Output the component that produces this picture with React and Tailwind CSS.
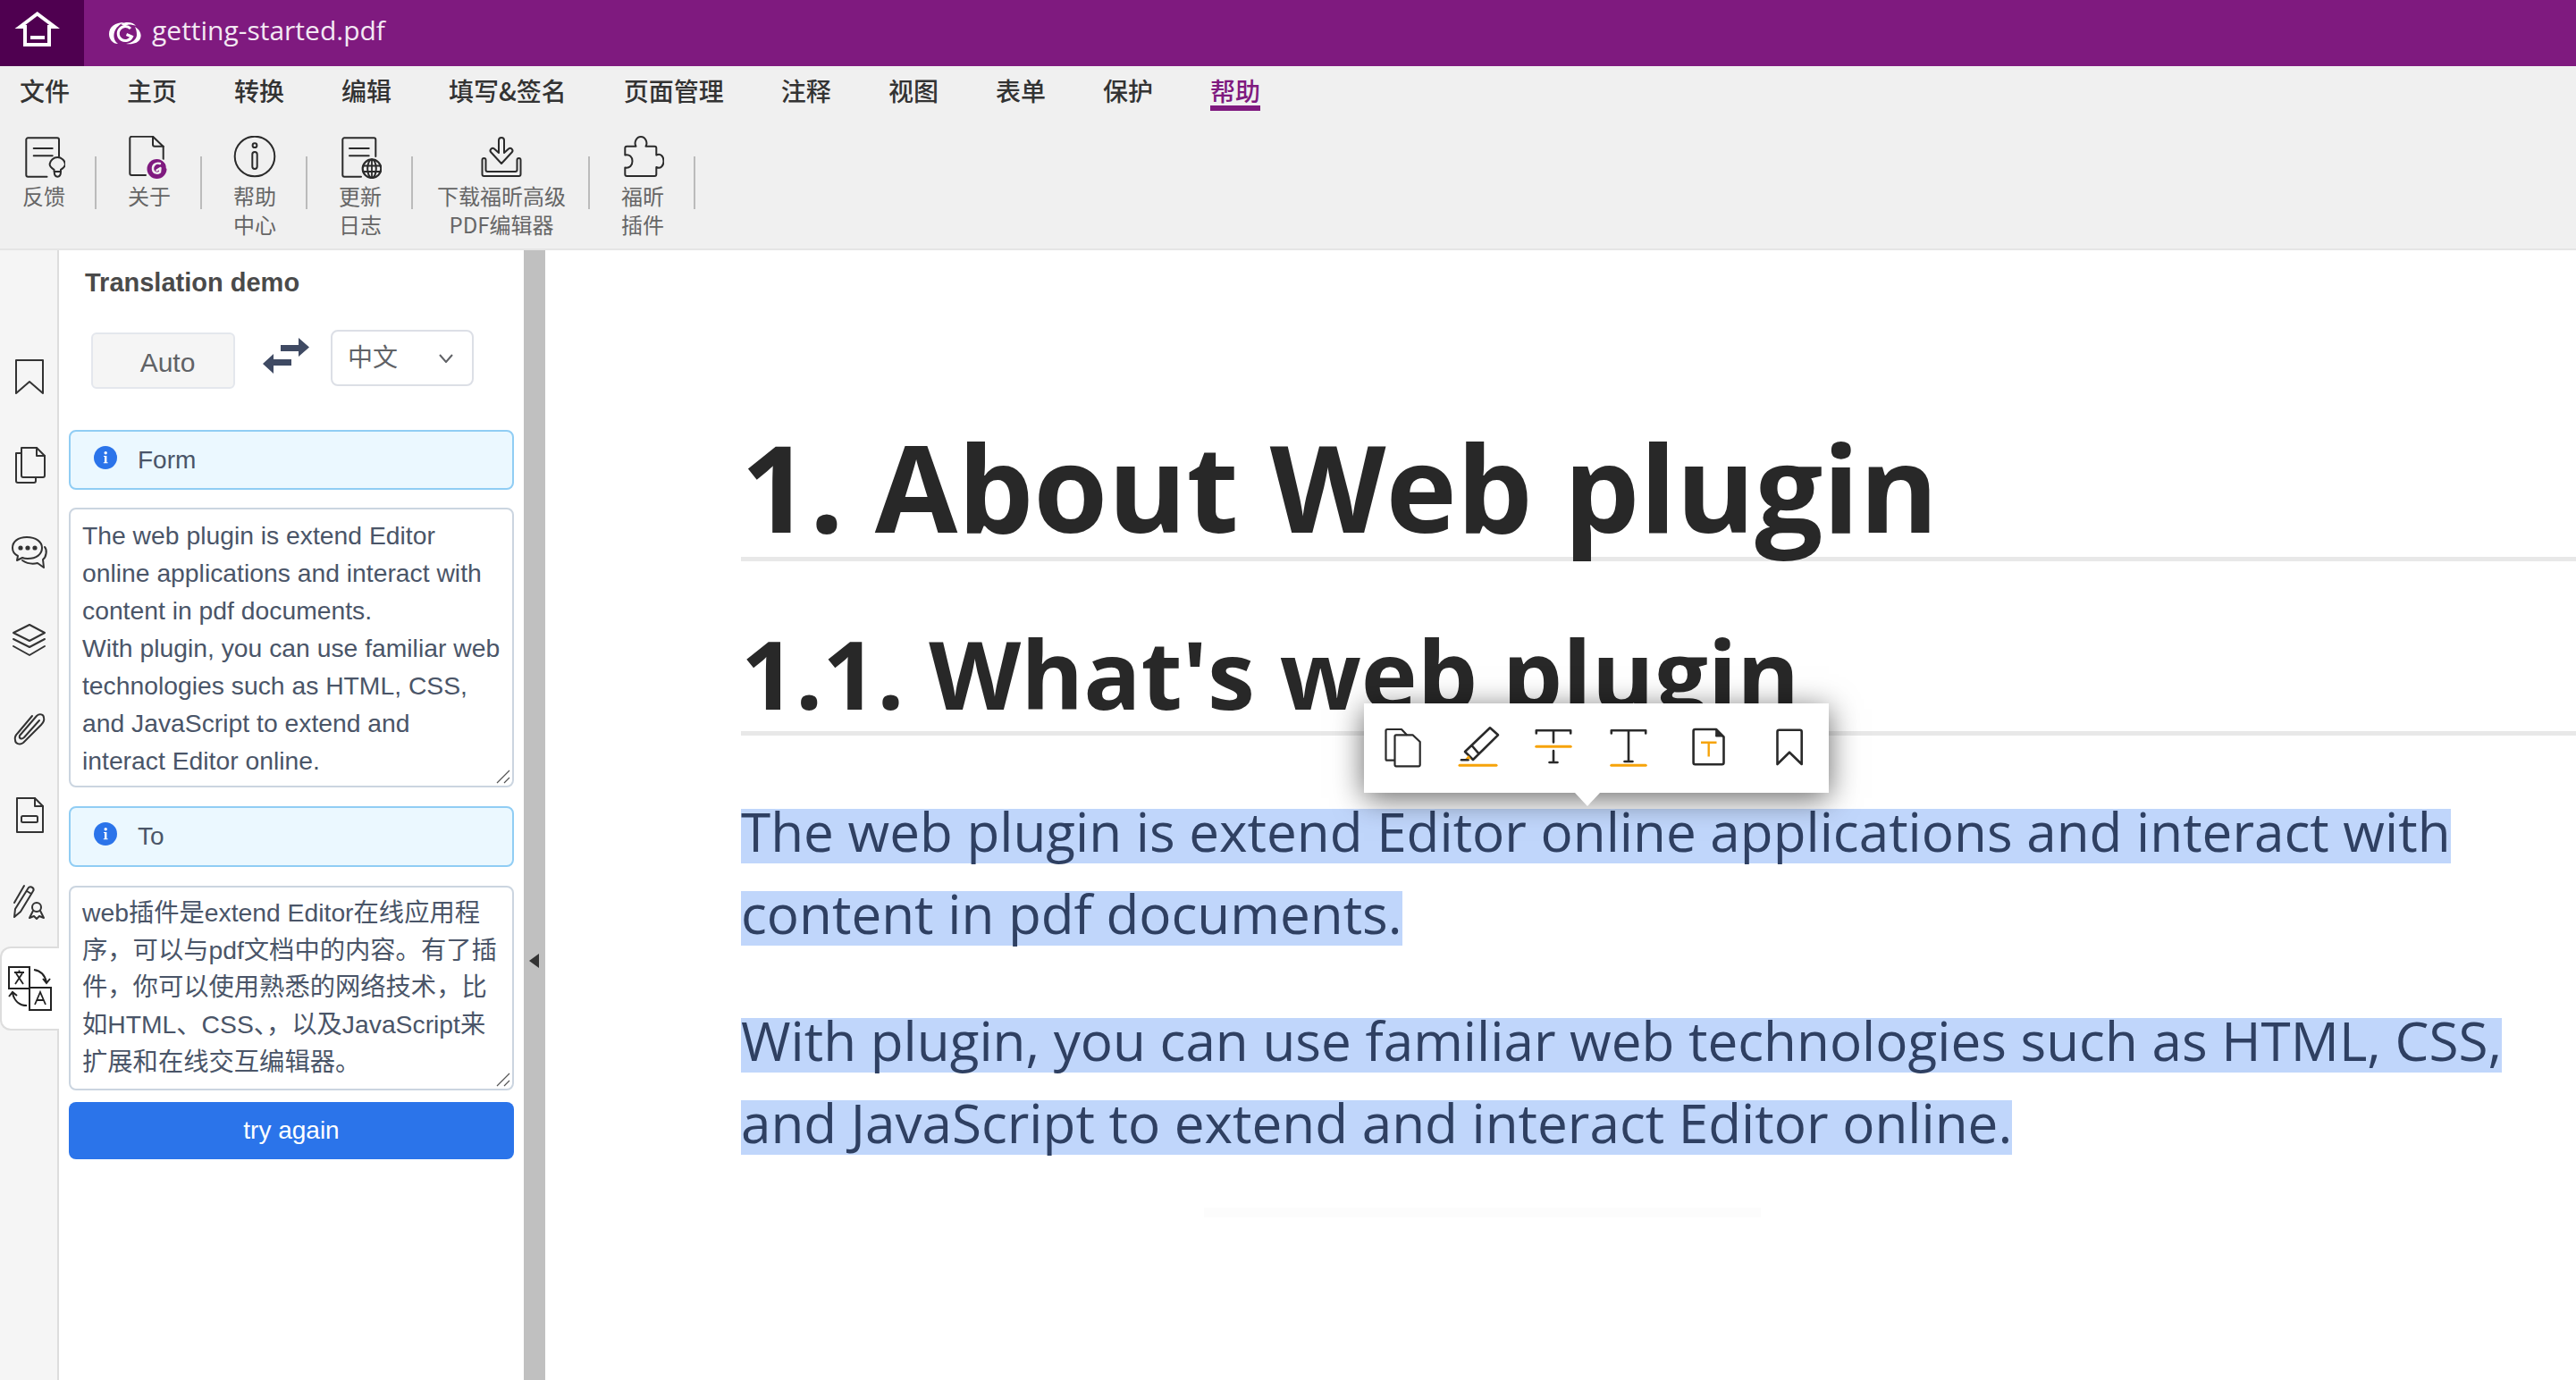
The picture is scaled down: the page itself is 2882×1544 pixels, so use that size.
import React from "react";

const S = { fill: "none", stroke: "#2b2b2b", strokeWidth: 2, strokeLinecap: "round", strokeLinejoin: "round" };

function Foxit() {
  return (
    <svg width="36" height="26" viewBox="0 0 36 26">
      <path d="M17 1 C7 1 0 6 0 14 C0 20 4 25 10 25 C6 22 4.5 17 6 12 C7.5 7 12 3 17 1 Z" fill="#fff" />
      <path d="M13 3 C20 -0.5 27 1 30 5 C25 3 21 3 17.5 5 Z" fill="#fff" />
      <path d="M29 6 C34 9 37 14 35 19 C33 24 27 26 19 25 C26 24 31 20 31 15 C31 11 30 8 29 6 Z" fill="#fff" />
      <path d="M24 8 A8 8 0 1 0 25.5 17 L19.5 14.5" fill="none" stroke="#fff" strokeWidth="3" />
    </svg>
  );
}

const RibbonIcons = {
  feedback: (
    <svg width="48" height="48" viewBox="0 0 48 48" {...S}>
      <path d="M41 23 V4.3 a2 2 0 0 0 -2 -2 H6.3 a2 2 0 0 0 -2 2 V43.7 a2 2 0 0 0 2 2 H27.5" />
      <path d="M12.7 14 H33.7 M12.7 22.3 H33.7" />
      <path d="M35.5 40 V37.8 C32.5 36 30.6 34 30.6 31.5 A8.8 8.8 0 0 1 48 31.5 C48 34 46 36 43 37.8 V40 Z M35.7 40 C35.7 47.5 43 47.5 43 40" />
    </svg>
  ),
  about: (
    <svg width="48" height="48" viewBox="0 0 48 48" {...S}>
      <path d="M39.7 26 V12 L28 0.8 H4.3 a2 2 0 0 0 -2 2 V42 a2 2 0 0 0 2 2 H20" />
      <path d="M28 1 V9.7 a2 2 0 0 0 2 2 H39.7" />
      <circle cx="32.5" cy="37" r="11" fill="#7f1a7f" stroke="none" />
      <path d="M36 31 C31 29.5 27.5 33 28 37.5 C28.5 41.5 33 43 36 40.5 L36.5 36 L32.5 38.5" fill="none" stroke="#f0f0f0" strokeWidth="2.4" />
      <path d="M37 26 C41 28 44 31 43.5 36" fill="none" stroke="#f0f0f0" strokeWidth="1.5" />
    </svg>
  ),
  info: (
    <svg width="48" height="48" viewBox="0 0 48 48" {...S}>
      <circle cx="24" cy="23" r="22.3" />
      <circle cx="24" cy="10.7" r="2.4" />
      <rect x="21.3" y="18" width="5.4" height="19" rx="2.7" />
    </svg>
  ),
  update: (
    <svg width="48" height="48" viewBox="0 0 48 48" {...S}>
      <path d="M41.3 23 V4.3 a2 2 0 0 0 -2 -2 H6.3 a2 2 0 0 0 -2 2 V43.7 a2 2 0 0 0 2 2 H25" />
      <path d="M12 14 H33.7 M12 22.3 H33.7" />
      <circle cx="37" cy="36.7" r="10.3" strokeWidth="2.2" />
      <ellipse cx="37" cy="36.7" rx="4.8" ry="10.3" />
      <path d="M37 26.5 V47 M27.2 33.5 H46.8 M27.2 40 H46.8" strokeWidth="1.8" />
    </svg>
  ),
  download: (
    <svg width="48" height="48" viewBox="0 0 48 48" {...S}>
      <path d="M2.5 27 V43 a2 2 0 0 0 2 2 H43.5 a2 2 0 0 0 2 -2 V27 a1 1 0 0 0 -4 0 V38 a2 2 0 0 1 -2 2 H8.5 a2 2 0 0 1 -2 -2 V27 a1 1 0 0 0 -4 0 Z" />
      <path d="M21 5 a3 3 0 0 1 6 0 V19 L32 14.5 a2.7 2.7 0 0 1 3.8 3.8 L24 31 L12.2 18.3 a2.7 2.7 0 0 1 3.8 -3.8 L21 19 Z" />
    </svg>
  ),
  plugin: (
    <svg width="48" height="48" viewBox="0 0 48 48" {...S}>
      <path d="M6.3 11.7 H16.5 C14 7.5 17 1 22 1 C27 1 30 7.5 27.5 11.7 H37.3 a2 2 0 0 1 2 2 V21.5 C44 19 47.5 23 47.5 28.3 C47.5 33.5 44 37.5 39.3 35 V43 a2 2 0 0 1 -2 2 H6.3 a2 2 0 0 1 -2 -2 V35.5 C9.5 36.5 12.5 33 12.5 28.3 C12.5 23.5 9.5 20.5 4.3 21.5 V13.7 a2 2 0 0 1 2 -2 Z" />
    </svg>
  ),
};

const ribbon = [
  { icon: "feedback", lines: ["反馈"], w: "w-[108px]", pr: "pr-[10px]" },
  { icon: "about", lines: ["关于"], w: "w-[118px]", pr: "" },
  { icon: "info", lines: ["帮助", "中心"], w: "w-[118px]", pr: "" },
  { icon: "update", lines: ["更新", "日志"], w: "w-[118px]", pr: "" },
  { icon: "download", lines: ["下载福昕高级", "PDF编辑器"], w: "w-[198px]", pr: "" },
  { icon: "plugin", lines: ["福昕", "插件"], w: "w-[118px]", pr: "" },
];

const menu = ["文件", "主页", "转换", "编辑", "填写&签名", "页面管理", "注释", "视图", "表单", "保护"];

const SI = { fill: "none", stroke: "#333", strokeWidth: 2, strokeLinecap: "round", strokeLinejoin: "round" };
const side = [
  <svg width="40" height="44" viewBox="0 0 40 44" {...SI}><path d="M5 3 H35 V40 L20 27 L5 40 Z" /></svg>,
  <svg width="40" height="44" viewBox="0 0 40 44" {...SI}><path d="M5 9 H11 M5 9 V40 a2 2 0 0 0 2 2 H25 a2 2 0 0 0 2 -2 V36" /><path d="M11 3 H28 L37 12 V34 a2 2 0 0 1 -2 2 H13 a2 2 0 0 1 -2 -2 Z" /><path d="M28 3 V12 H37" /></svg>,
  <svg width="44" height="44" viewBox="0 0 44 44" {...SI}><path d="M19 5 C9 5 3 10 3 17 C3 21 5 24 9 26 L8 31 L14 28 C16 29 18 29 20 29 C30 29 36 24 36 17 C36 10 29 5 19 5 Z" /><path d="M39 16 C42 19 41 27 37 30 L38 39 L31 34 C27 35 20 35 14 31" /><circle cx="12" cy="17" r="1.6" fill="#333" /><circle cx="20" cy="17" r="1.6" fill="#333" /><circle cx="28" cy="17" r="1.6" fill="#333" /></svg>,
  <svg width="44" height="44" viewBox="0 0 44 44" {...SI}><path d="M22 5 L39 14 L22 23 L4 14 Z" /><path d="M4 21 L22 30 L39 21" /><path d="M4 29 L22 39 L39 29" /></svg>,
  <svg width="44" height="44" viewBox="0 0 44 44" {...SI}><path d="M33 14 L16 33 C13 36 10 34 11 31 L30 9 C33 6 38 7 38 11 C39 14 37 17 35 19 L15 39 C11 42 6 40 6 36 C5 33 7 30 9 28 L25 9" /></svg>,
  <svg width="40" height="44" viewBox="0 0 40 44" {...SI}><path d="M6 3 H26 L35 12 V41 H6 Z" /><path d="M26 3 V12 H35" /><rect x="11" y="23" width="18" height="7" rx="1.5" /></svg>,
  <svg width="44" height="44" viewBox="0 0 44 44" {...SI}><path d="M21 5 C24 3 28 6 26 9 L12 32 L5 38 L6 29 Z" /><path d="M19 9 L24 12" /><path d="M16 3 L5 22" /><circle cx="30" cy="27" r="5" /><path d="M26 31 L22 39 L27 37 L30 40 L33 37 L38 39 L34 31" /></svg>,
];

const PS = { fill: "none", stroke: "#2a2a2a", strokeWidth: 2.6, strokeLinecap: "round", strokeLinejoin: "round" };
const OR = "#f6a30a";
const popupIcons = [
  <svg width="48" height="48" viewBox="0 0 48 48" {...PS} strokeWidth="2.2"><path d="M14 38.7 H6 a1.5 1.5 0 0 1 -1.5 -1.5 V5.5 A1.5 1.5 0 0 1 6 4 H22 L27.7 10" /><path d="M16 10.3 H34.5 L42.7 18 V43.8 a1.5 1.5 0 0 1 -1.5 1.5 H16 a1.5 1.5 0 0 1 -1.5 -1.5 V11.8 A1.5 1.5 0 0 1 16 10.3 Z" /></svg>,
  <svg width="48" height="48" viewBox="0 0 48 48" {...PS}><path d="M37 2.3 L46 10.3 L18 38 L9 29 Z M17.4 23 L24.6 31.3" /><path d="M5 38.3 H12.5" /><path d="M9.5 37 L13 33 L16 37.5 Z" fill={OR} stroke="none" /><path d="M3 44.3 H44" stroke={OR} strokeWidth="3" /></svg>,
  <svg width="48" height="48" viewBox="0 0 48 48" {...PS}><path d="M4.8 8.5 V5.3 H43.2 V8.5 M24 5.3 V18.5 M24 28 V41 M19.5 41 H28.5" /><path d="M4.8 23.3 H43.2" stroke={OR} strokeWidth="3" /></svg>,
  <svg width="48" height="48" viewBox="0 0 48 48" {...PS}><path d="M4.8 8.5 V5.3 H43.2 V8.5 M24 5.3 V40 M19.5 40 H28.5" /><path d="M4.8 44.3 H43.2" stroke={OR} strokeWidth="3" /></svg>,
  <svg width="48" height="48" viewBox="0 0 48 48" {...PS}><path d="M8.6 4 H32 L40.5 12.5 V41.3 a2 2 0 0 1 -2 2 H8.6 a2 2 0 0 1 -2 -2 V6 a2 2 0 0 1 2 -2 Z" /><path d="M32 5 L39.5 12 H32 Z" fill="#2a2a2a" strokeWidth="1" /><path d="M15 18.7 H32.5 M23.7 18.7 V34.5" stroke={OR} strokeWidth="2.4" strokeLinecap="butt" /></svg>,
  <svg width="48" height="48" viewBox="0 0 48 48" {...PS}><path d="M12.5 4.7 H35.7 a2 2 0 0 1 2 2 V43 L24 29.7 L10.5 43 V6.7 a2 2 0 0 1 2 -2 Z" /></svg>,
];

function Info() {
  return (
    <svg width="26" height="26" viewBox="0 0 26 26" className="shrink-0">
      <circle cx="13" cy="13" r="13" fill="#2b74ea" />
      <path d="M11 11 H14.4 V18.2 H15.6 V19.2 H10.8 V18.2 H12 V12 H11 Z" fill="#fff" />
      <circle cx="13.2" cy="7.8" r="1.7" fill="#fff" />
    </svg>
  );
}

function Alert({ text, h }) {
  return (
    <div className={`flex items-center gap-[23px] rounded-lg border-2 border-[#90cdf4] bg-[#ebf8ff] pl-[26px] text-[#4a5568] ${h}`}>
      <div className="-mt-[6px]"><Info /></div>
      <span className="text-[28px]">{text}</span>
    </div>
  );
}

function Area({ lines, h, pt, leading }) {
  return (
    <div className={`relative rounded-lg border-2 border-[#cbd5e0] bg-white pl-[13px] text-[28.3px] text-[#4a5568] ${h} ${pt} ${leading}`}>
      {lines.map((l) => (
        <div key={l} className="whitespace-nowrap">{l}</div>
      ))}
      <svg width="16" height="16" viewBox="0 0 16 16" className="absolute bottom-[2px] right-[2px]" stroke="#555" strokeWidth="1.2">
        <path d="M1 15 L15 1 M9 15 L15 9" />
      </svg>
    </div>
  );
}

function Hl({ children }) {
  return <div className="flex h-[61px] items-start whitespace-nowrap"><span className="h-[61px] bg-[#c0d6fb] leading-[50px]">{children}</span></div>;
}

export default function App() {
  return (
    <div className="relative flex h-[1544px] w-[2882px] flex-col overflow-hidden bg-white font-['Liberation_Sans','Noto_Sans_CJK_SC',sans-serif]">
      <header className="flex h-[74px] shrink-0 items-center bg-[#7f1a7f]">
        <div className="h-full w-[94px] bg-[#4f0050]">
          <svg width="94" height="74" viewBox="0 0 94 74">
            <path d="M22.5 30 L41.7 15.5 L61 30 H55 V50 H28 V30 Z" fill="none" stroke="#fff" strokeWidth="4" strokeLinejoin="miter" />
            <rect x="34" y="40" width="16" height="4" fill="#fff" />
          </svg>
        </div>
        <div className="ml-[28px]"><Foxit /></div>
        <span className="-mt-[7px] ml-[12px] font-['Open_Sans',sans-serif] text-[30px] text-[#f3e8f3]">getting-started.pdf</span>
      </header>

      <nav className="flex h-[78px] shrink-0 items-start gap-[64px] bg-[#f0f0f0] pl-[22px] pt-[7px] font-['Noto_Sans_CJK_SC',sans-serif] text-[28px] font-medium leading-[40px] text-[#333]">
        {menu.map((m) => (
          <span key={m}>{m}</span>
        ))}
        <span className="h-[43px] border-b-[6px] border-[#7f1a7f] text-[#7f1a7f]">帮助</span>
      </nav>

      <div className="flex h-[128px] shrink-0 items-start border-b-2 border-[#e5e5e5] bg-[#f0f0f0] font-['Noto_Sans_CJK_SC',sans-serif] text-[24px] leading-[32px] text-[#666]">
        {ribbon.map((r) => (
          <div key={r.icon} className={`relative flex flex-col items-center ${r.w} ${r.pr}`}>
            {RibbonIcons[r.icon]}
            <div className="mt-[3px] text-center">
              {r.lines.map((l) => (
                <div key={l} className="whitespace-nowrap">{l}</div>
              ))}
            </div>
            <div className="absolute right-0 top-[23px] h-[59px] w-[2px] bg-[#bbb]" />
          </div>
        ))}
      </div>

      <main className="flex min-h-0 flex-1">
        <aside className="relative flex w-[66px] shrink-0 flex-col items-center border-r-2 border-[#ddd] bg-[#f5f5f5] pt-[93px]">
          {side.map((ic, i) => (
            <div key={i} className="ml-[2px] flex h-[98px] items-center justify-center">{ic}</div>
          ))}
          <div className="z-10 flex h-[94px] w-[66px] items-center justify-center self-start rounded-l-[12px] border-2 border-r-0 border-[#ddd] bg-white">
            <svg width="50" height="50" viewBox="0 0 50 50" fill="none" stroke="#222" strokeWidth="2">
              <rect x="1" y="1" width="23" height="24" />
              <rect x="24" y="24" width="24" height="25" />
              <path d="M7 7 H18 M12.5 4.5 V7 M8 20 L16 8 M17 20 L9 8" strokeWidth="1.8" />
              <path d="M30 43 L36 29 L42 43 M32 38 H40" strokeWidth="1.8" />
              <path d="M29 4 C36 5 41 9 43 18 M39 14 L43 19 L47 14" strokeWidth="2" />
              <path d="M21 44 C13 44 7 39 5 30 M1 34 L5 29 L10 33" strokeWidth="2" />
            </svg>
          </div>
        </aside>

        <section className="flex w-[520px] shrink-0 flex-col bg-white px-[11px] text-[#4a5568]">
          <h2 className="ml-[18px] mt-[20px] text-[29px] font-bold leading-[32px] text-[#4a4a4a]">Translation demo</h2>
          <div className="mt-[37px] flex items-start">
            <div className="ml-[25px] mt-[3px] flex h-[63px] w-[161px] items-center justify-center rounded-md border-2 border-[#e4e7ed] bg-[#f5f5f5] pl-[10px] pt-[4px] text-[30px] text-[#606266]">Auto</div>
            <svg width="52" height="40" viewBox="0 0 52 40" className="ml-[31px] mt-[9px]" fill="#3f4a63">
              <path d="M20 8 H40 V0 L52 10.5 L40 21 V15 H20 Z" />
              <path d="M32 24 H12 V18 L0 29 L12 40 V31 H32 Z" />
            </svg>
            <div className="ml-[24px] flex h-[63px] w-[160px] items-center rounded-lg border-2 border-[#dcdfe6] pl-[17px] text-[28px] text-[#606266]">
              <span className="mt-[1px]">中文</span>
              <svg width="16" height="10" viewBox="0 0 16 10" className="ml-[46px]" fill="none" stroke="#606266" strokeWidth="2"><path d="M1 1 L8 9 L15 1" /></svg>
            </div>
          </div>
          <div className="mt-[46px]"><Alert text="Form" h="h-[67px]" /></div>
          <div className="mt-[20px]">
            <Area h="h-[313px]" pt="pt-[8px]" leading="leading-[42px]" lines={[
              "The web plugin is extend Editor",
              "online applications and interact with",
              "content in pdf documents.",
              "With plugin, you can use familiar web",
              "technologies such as HTML, CSS,",
              "and JavaScript to extend and",
              "interact Editor online.",
            ]} />
          </div>
          <div className="mt-[21px]"><Alert text="To" h="h-[68px]" /></div>
          <div className="mt-[21px]">
            <Area h="h-[229px]" pt="pt-[8px]" leading="leading-[41.7px]" lines={[
              "web插件是extend Editor在线应用程",
              "序，可以与pdf文档中的内容。有了插",
              "件，你可以使用熟悉的网络技术，比",
              "如HTML、CSS、，以及JavaScript来",
              "扩展和在线交互编辑器。",
            ]} />
          </div>
          <button className="mt-[13px] h-[64px] w-full rounded-lg bg-[#2b74ea] text-[28px] text-white">try again</button>
        </section>

        <div className="flex w-[24px] shrink-0 items-start bg-[#c0c0c0] pl-[6px] pt-[787px]">
          <svg width="11" height="16" viewBox="0 0 11 16"><path d="M11 0 V16 L0 8 Z" fill="#333" /></svg>
        </div>

        <article className="min-w-0 flex-1 pl-[219px] font-['Open_Sans',sans-serif]">
          <h1 className="mt-[197px] border-b-[5px] border-[#e8e8e8] pb-[12px] text-[134.2px] font-bold leading-[134px] text-[#282828]">1. About Web plugin</h1>
          <h2 className="mt-[72px] border-b-[5px] border-[#e8e8e8] pb-[11.5px] text-[106.5px] font-bold leading-[106.5px] text-[#282828]">1.1. What's web plugin</h2>
          <div className="mt-[82px] text-[60.2px] text-[#2f4062]">
            <Hl>The web plugin is extend Editor online applications and interact with</Hl>
            <div className="mt-[31px]"><Hl>content in pdf documents.</Hl></div>
            <div className="mt-[81px]"><Hl>With plugin, you can use familiar web technologies such as HTML, CSS,</Hl></div>
            <div className="mt-[31px]"><Hl>and JavaScript to extend and interact Editor online.</Hl></div>
          </div>
          <div className="ml-[518px] mt-[59px] h-[11px] w-[623px] bg-[#fcfcfc]" />
        </article>
      </main>

      <div className="absolute left-[1526px] top-[787px] z-20 flex h-[100px] w-[520px] items-center bg-white pl-[20px] shadow-[0_6px_32px_rgba(0,0,0,0.6)]">
        {popupIcons.map((ic, i) => (
          <div key={i} className={i === 0 ? "-mt-[2px]" : i < 4 ? "-mt-[2px] ml-[36px]" : "-mt-[2px] ml-[42px]"}>{ic}</div>
        ))}
        <div className="absolute left-[236px] top-[100px] h-0 w-0 border-x-[14px] border-t-[15px] border-x-transparent border-t-white" />
      </div>
    </div>
  );
}
